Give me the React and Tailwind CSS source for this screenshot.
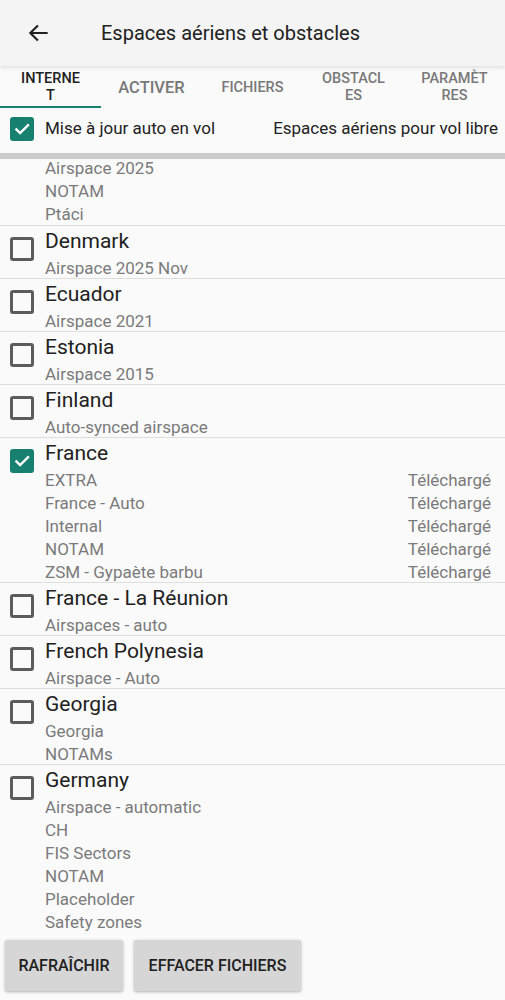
import React from 'react';

const countries = [
  { name: 'Denmark', subs: ['Airspace 2025 Nov'] },
  { name: 'Ecuador', subs: ['Airspace 2021'] },
  { name: 'Estonia', subs: ['Airspace 2015'] },
  { name: 'Finland', subs: ['Auto-synced airspace'] },
  {
    name: 'France',
    checked: true,
    subs: ['EXTRA', 'France - Auto', 'Internal', 'NOTAM', 'ZSM - Gypaète barbu'],
    status: 'Téléchargé',
  },
  { name: 'France - La Réunion', subs: ['Airspaces - auto'] },
  { name: 'French Polynesia', subs: ['Airspace - Auto'] },
  { name: 'Georgia', subs: ['Georgia', 'NOTAMs'] },
  {
    name: 'Germany',
    subs: ['Airspace - automatic', 'CH', 'FIS Sectors', 'NOTAM', 'Placeholder', 'Safety zones', 'Sites'],
  },
];

const Check = ({ checked }) =>
  checked ? (
    <div className="w-[24px] h-[24px] rounded-[3px] bg-[#17806f] flex items-center justify-center shrink-0">
      <svg width="18" height="18" viewBox="0 0 24 24" fill="none" stroke="white" strokeWidth="3.2" strokeLinecap="square">
        <path d="M4.5 12.5l5 5L20 7" />
      </svg>
    </div>
  ) : (
    <div className="w-[24px] h-[24px] rounded-[3px] border-[3px] border-[#5c5c5c] shrink-0" />
  );

const Tab = ({ children, active, size = 'text-[14.5px]' }) => (
  <div className={`flex-1 h-full flex items-center justify-center text-center leading-[17px] font-medium ${size} ${active ? 'text-[#212121]' : 'text-[#787878]'} relative`}>
    <span>{children}</span>
    {active && <div className="absolute left-0 right-0 bottom-0 h-[2px] bg-[#17806f]" />}
  </div>
);

// sub line: 23px tall, glyphs nudged down a little to sit like the device rendering
const Sub = ({ children, right }) => (
  <div className="h-[23px] pt-[3px] leading-[20px] text-[17px] text-[#7a7a7a] flex justify-between">
    <span>{children}</span>
    {right && <span>{right}</span>}
  </div>
);

const Item = ({ item }) => (
  <div className="border-t border-[#dedede] flex pl-[10px] pr-[14px] pt-[2px]">
    <div className="mt-[9px]">
      <Check checked={item.checked} />
    </div>
    <div className="ml-[11px] flex-1">
      <div className="h-[27px] leading-[27px] text-[21px] text-[#212121]">{item.name}</div>
      {item.subs.map((s) => (
        <Sub key={s} right={item.status}>{s}</Sub>
      ))}
    </div>
  </div>
);

export default function App() {
  return (
    <div className="w-[505px] h-[1000px] bg-[#fafafa] flex flex-col overflow-hidden" style={{ fontFamily: 'Roboto, "Noto Sans", sans-serif' }}>
      {/* toolbar */}
      <div className="h-[66px] bg-[#f4f4f4] flex items-center shadow-[0_2px_4px_rgba(0,0,0,0.1)] relative z-10 shrink-0">
        <div className="w-[101px] pl-[26px]">
          <svg width="26" height="26" viewBox="0 0 24 24" fill="none" stroke="#212121" strokeWidth="2">
            <path d="M20 12H4.5M11 5l-7 7 7 7" />
          </svg>
        </div>
        <div className="text-[20px] text-[#212121]">Espaces aériens et obstacles</div>
      </div>

      {/* tabs */}
      <div className="h-[42px] flex shrink-0">
        <Tab active>INTERNE<br />T</Tab>
        <Tab size="text-[16.5px]">ACTIVER</Tab>
        <Tab>FICHIERS</Tab>
        <Tab>OBSTACL<br />ES</Tab>
        <Tab>PARAMÈT<br />RES</Tab>
      </div>

      {/* auto update row */}
      <div className="h-[42px] flex items-center pl-[10px] pr-[7px] shrink-0">
        <Check checked />
        <span className="ml-[11px] text-[17px] text-[#212121]">Mise à jour auto en vol</span>
        <span className="ml-auto text-[17px] text-[#212121]">Espaces aériens pour vol libre</span>
      </div>
      <div className="mt-[3px] h-[6px] bg-[#cccccc] shrink-0" />

      {/* list */}
      <div className="flex-1 overflow-hidden">
        <div className="-mt-[4px] pl-[45px] pb-[1px]">
          {['Airspace 2025', 'NOTAM', 'Ptáci'].map((s) => (
            <Sub key={s}>{s}</Sub>
          ))}
        </div>
        {countries.map((c) => (
          <Item key={c.name} item={c} />
        ))}
      </div>

      {/* buttons */}
      <div className="h-[65px] shrink-0 flex gap-[11px] pl-[5px] pt-[5px]">
        <button className="h-[51px] w-[118px] bg-[#d6d6d6] rounded-[2px] shadow-[0_1px_3px_rgba(0,0,0,0.3)] text-[16px] font-medium text-[#212121]">
          RAFRAÎCHIR
        </button>
        <button className="h-[51px] w-[167px] bg-[#d6d6d6] rounded-[2px] shadow-[0_1px_3px_rgba(0,0,0,0.3)] text-[16px] font-medium text-[#212121]">
          EFFACER FICHIERS
        </button>
      </div>
    </div>
  );
}
